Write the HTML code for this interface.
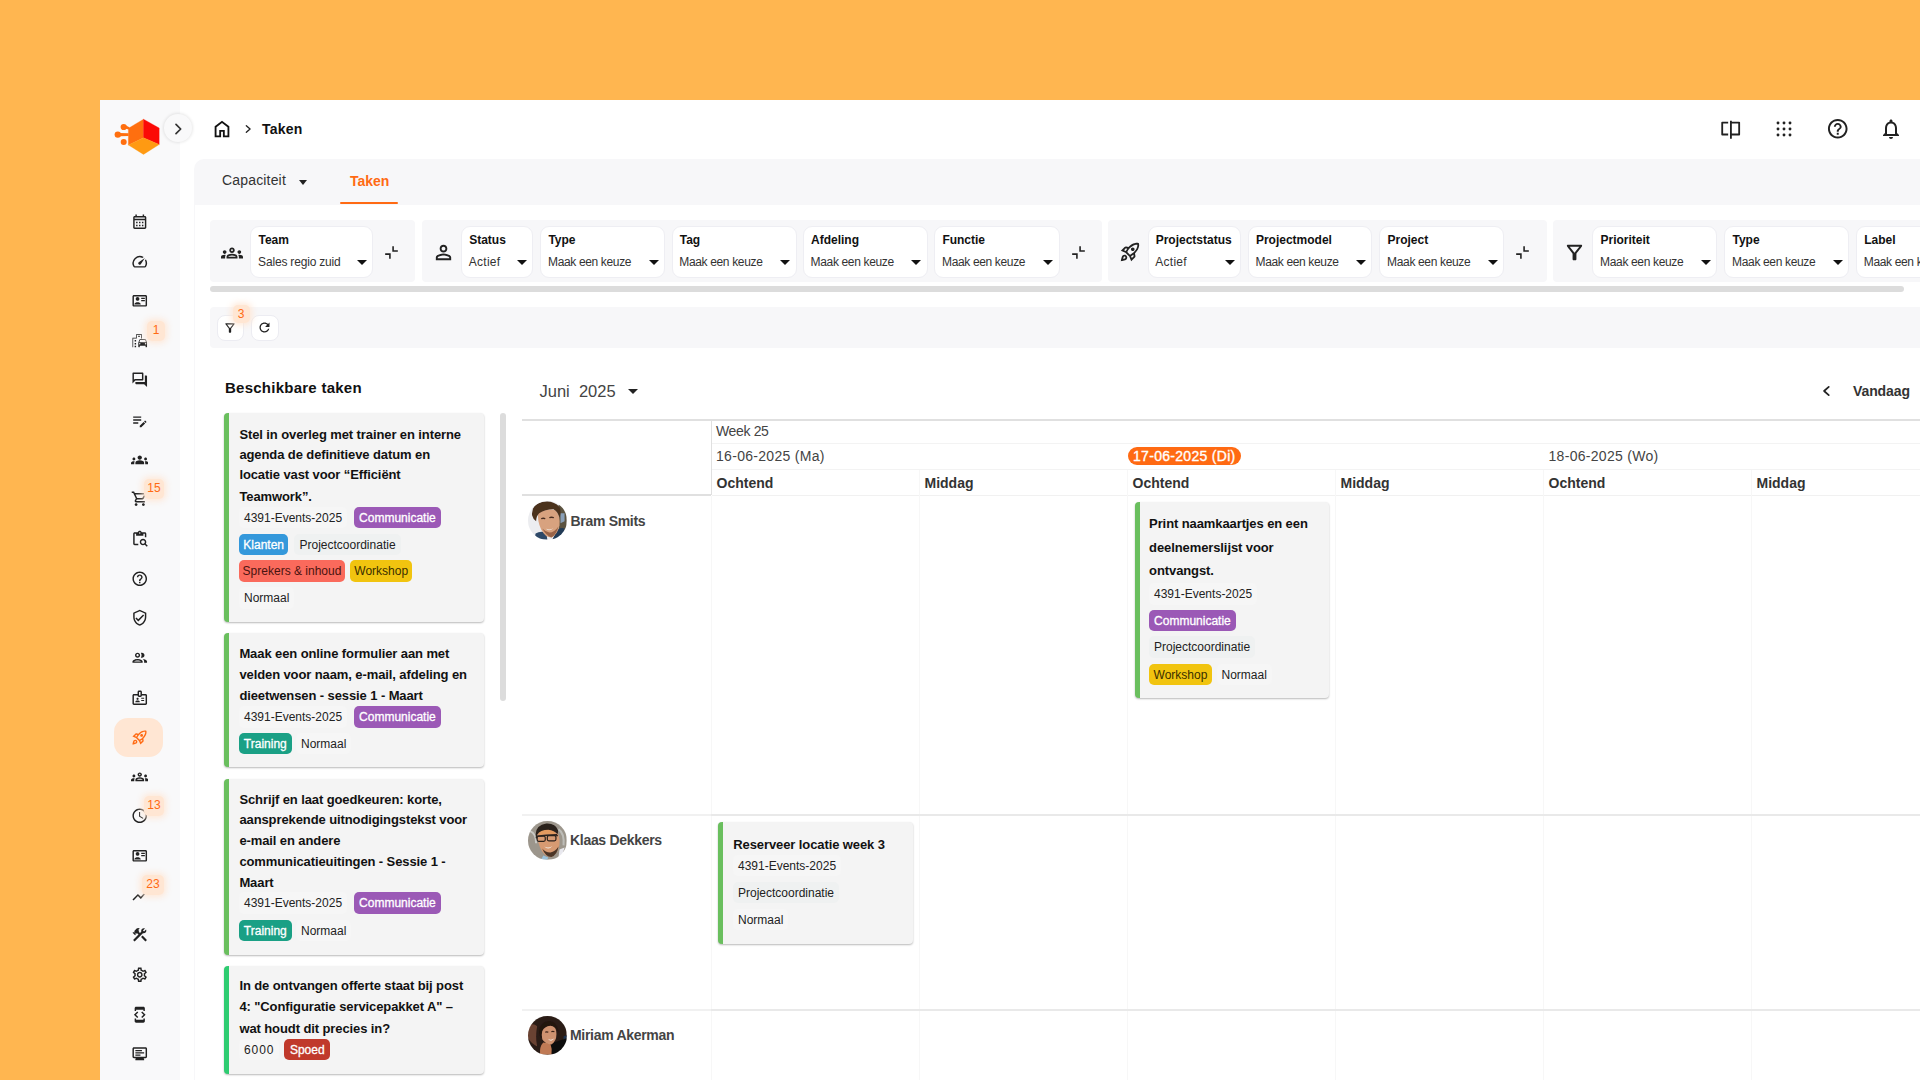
<!DOCTYPE html>
<html lang="nl">
<head>
<meta charset="utf-8">
<title>Taken</title>
<style>
*{box-sizing:border-box;margin:0;padding:0}
html,body{width:1920px;height:1080px;overflow:hidden}
body{background:#ffb650;font-family:"Liberation Sans",sans-serif;color:#222;position:relative}
.abs{position:absolute}
#app{position:absolute;left:100px;top:100px;width:1820px;height:980px;background:#fff;overflow:hidden}
#side{position:absolute;left:0;top:0;width:80px;height:980px;background:#f9f9fa}
#side svg.ic{position:absolute;left:31px;width:16px;height:16px;fill:#222}
.sbadge{position:absolute;min-width:17px;height:18px;border-radius:5px;background:#ffe6d3;color:#ff6a13;font-size:12px;line-height:18px;text-align:center;padding:0 3px;box-shadow:0 0 6px 2px rgba(255,230,211,.9)}
#collapse{position:absolute;left:64px;top:14.300px;width:28px;height:28px;border-radius:50%;background:#f9f9fa;box-shadow:0 0 3px 1px rgba(0,0,0,.09)}
#tabs{position:absolute;left:94px;top:58.5px;width:1730px;height:46.3px;background:#f7f7f9;border-top-left-radius:10px}
.sel{position:absolute;top:126px;height:52px;background:#fff;border:1px solid #eeeef3;border-radius:9px}
.sel b{position:absolute;left:7.2px;top:5.5px;font-size:12px;line-height:14px;color:#111;white-space:nowrap}
.sel span{position:absolute;left:6.8px;top:27.5px;font-size:12px;line-height:14px;color:#333;white-space:nowrap;letter-spacing:-.35px}
.sel i{position:absolute;right:5.5px;top:33px;width:0;height:0;border-left:5px solid transparent;border-right:5px solid transparent;border-top:5px solid #111}
.grp{position:absolute;top:119.7px;height:63px;background:#f7f7f9;border-radius:4px}
.card{position:absolute;background:#f4f4f4;border-left:5px solid #6abf5e;border-radius:4px;box-shadow:0 1px 2px rgba(0,0,0,.28)}
.card .t{position:absolute;left:10px;font-weight:bold;font-size:13px;line-height:20.7px;color:#111;white-space:nowrap;letter-spacing:-.1px}
.chip{position:absolute;height:21.5px;line-height:22.5px;border-radius:5px;font-size:12px;padding:0 5px;white-space:nowrap;letter-spacing:0;color:#222}
.c-pl{background:#f6f6f6}
.c-pu{background:#9b59b6;color:#fff;-webkit-text-stroke:.3px #fff}
.c-bl{background:#3498db;color:#fff;-webkit-text-stroke:.3px #fff}
.c-rd{background:#fa6a5c;color:#4a1410}
.c-ye{background:#f1c40f;color:#3a2f00}
.c-gr{background:#1aa085;color:#fff;-webkit-text-stroke:.3px #fff}
.c-sp{background:#c0392b;color:#fff;-webkit-text-stroke:.3px #fff}
.c-pc{background:#eff1f1}
.hl{position:absolute;background:#ececec;height:1px}
.vl{position:absolute;background:#f0f0f0;width:1px}
.gh{letter-spacing:.3px;position:absolute;font-size:14px;line-height:16px;color:#444;white-space:nowrap}
.ghb{position:absolute;font-size:14px;line-height:16px;color:#333;font-weight:bold;white-space:nowrap}
.nm{letter-spacing:-.3px;position:absolute;font-size:14px;line-height:16px;color:#444;font-weight:bold;white-space:nowrap}
.av{position:absolute;width:38px;height:38px;border-radius:50%;overflow:hidden}
</style>
</head>
<body>
<div id="app">
<div id="side"></div>
<svg class="abs" style="left:12px;top:16px" width="50" height="42" viewBox="112 116 50 42">
<polygon points="143.5,119.2 143.5,137.7 128.4,145 128.4,128.3" fill="#ff6f0f" stroke="#ff6f0f" stroke-width=".3"/>
<polygon points="143.5,119.2 159.2,128 159.2,144.5 143.5,137.7" fill="#fb0a06" stroke="#fb0a06" stroke-width=".3"/>
<polygon points="143.5,137.7 159.2,144.5 143.5,154.4 128.4,145" fill="#ff9a12" stroke="#ff9a12" stroke-width=".3"/>
<g fill="#ff6f0f"><circle cx="123.7" cy="127" r="3.1"/><circle cx="117.8" cy="134.600" r="3.2"/><circle cx="123.7" cy="142.1" r="3"/>
<polygon points="125.5,125.2 129.4,127.2 129.4,129.4 125.5,128.8"/><polygon points="119.5,133 128.600,133.200 128.600,136 119.500,136.200"/></g></svg>
<div id="collapse"></div>
<svg class="abs" style="left:70.400px;top:20.700px" width="16" height="16" viewBox="0 0 24 24" fill="none" stroke="#333" stroke-width="2.6" stroke-linecap="round" stroke-linejoin="round"><path d="M9 5l7 7-7 7"/></svg>
<svg class="abs" style="left:30.8px;top:113.2px" width="17.5" height="17.5" viewBox="0 0 24 24" fill="#222"><path d="M19 4h-1V2h-2v2H8V2H6v2H5c-1.11 0-1.99.9-1.99 2L3 20c0 1.1.89 2 2 2h14c1.1 0 2-.9 2-2V6c0-1.1-.9-2-2-2zm0 16H5V10h14v10zm0-12H5V6h14v2zM9 14H7v-2h2v2zm4 0h-2v-2h2v2zm4 0h-2v-2h2v2zm-8 4H7v-2h2v2zm4 0h-2v-2h2v2zm4 0h-2v-2h2v2z"/></svg>
<svg class="abs" style="left:30.8px;top:153.2px" width="17.5" height="17.5" viewBox="0 0 24 24" fill="#222"><path d="M20.38 8.57l-1.23 1.85a8 8 0 0 1-.22 7.58H5.07A8 8 0 0 1 15.58 6.85l1.85-1.23A10 10 0 0 0 3.35 19a2 2 0 0 0 1.72 1h13.85a2 2 0 0 0 1.74-1 10 10 0 0 0-.27-10.44zm-9.79 6.84a2 2 0 0 0 2.83 0l5.66-8.49-8.49 5.66a2 2 0 0 0 0 2.83z"/></svg>
<svg class="abs" style="left:30.8px;top:192.2px" width="17.5" height="17.5" viewBox="0 0 24 24" fill="#222"><path d="M20 4H4c-1.1 0-2 .9-2 2v12c0 1.1.9 2 2 2h16c1.1 0 2-.9 2-2V6c0-1.1-.9-2-2-2zm0 14H4V6h16v12zM9 12c1.38 0 2.5-1.12 2.5-2.5S10.380 7 9 7 6.500 8.120 6.500 9.500 7.620 12 9 12zm5-4h5v1.600h-5zm0 3h5v1.600h-5zM4.500 17c0-1.900 3-2.800 4.500-2.800s4.500.9 4.500 2.800z"/></svg>
<svg class="abs" style="left:30.8px;top:232.2px" width="17.5" height="17.5" viewBox="0 0 24 24" fill="#222"><path d="M20.57 10.66c-.14-.4-.52-.66-.97-.66h-7.190c-.46 0-.83.26-.98.66L10 14.770l.01 5.510c0 .38.31.72.69.72h.62c.38 0 .68-.38.68-.76V19h8v1.240c0 .38.31.76.69.76h.61c.38 0 .69-.34.69-.72l.01-1.370v-4.140l-1.430-4.110zm-8.160.34h7.190l1.030 3h-9.250l1.030-3zM12 17c-.55 0-1-.45-1-1s.45-1 1-1 1 .45 1 1-.45 1-1 1zm8 0c-.55 0-1-.45-1-1s.45-1 1-1 1 .45 1 1-.45 1-1 1zM14 9h1V3H7v5H2v13h1V9h5V4h6zM5 11h2v2H5zM10 5h2v2h-2zM5 15h2v2H5zM5 19h2v2H5z"/></svg>
<svg class="abs" style="left:30.8px;top:271.2px" width="17.5" height="17.5" viewBox="0 0 24 24" fill="#222"><path d="M15 4v7H5.170L4 12.170V4h11m1-2H3c-.55 0-1 .45-1 1v14l4-4h10c.55 0 1-.45 1-1V3c0-.55-.45-1-1-1zm5 4h-2v9H6v2c0 .55.45 1 1 1h11l4 4V7c0-.55-.45-1-1-1z"/></svg>
<svg class="abs" style="left:30.8px;top:312.2px" width="17.5" height="17.5" viewBox="0 0 24 24" fill="#222"><path d="M3 10h11v2H3v-2zm0-2h11V6H3v2zm0 8h7v-2H3v2zm15.010-3.130l.71-.71c.39-.39 1.020-.39 1.410 0l.71.71c.39.39.39 1.020 0 1.410l-.71.71-2.120-2.120zm-.71.71l-5.300 5.300V21h2.120l5.300-5.300-2.120-2.120z"/></svg>
<svg class="abs" style="left:30.8px;top:351.2px" width="17.5" height="17.5" viewBox="0 0 24 24" fill="#222"><path d="M12 12.750c1.630 0 3.070.39 4.240.9 1.080.48 1.760 1.560 1.760 2.730V18H6v-1.610c0-1.180.68-2.260 1.760-2.730 1.170-.52 2.610-.91 4.240-.91zM4 13c1.100 0 2-.9 2-2s-.9-2-2-2-2 .9-2 2 .9 2 2 2zm1.130 1.100c-.37-.06-.74-.1-1.130-.1-.99 0-1.930.21-2.780.58C.48 14.900 0 15.620 0 16.430V18h4.500v-1.610c0-.83.23-1.610.63-2.290zM20 13c1.100 0 2-.9 2-2s-.9-2-2-2-2 .9-2 2 .9 2 2 2zm4 3.430c0-.81-.48-1.530-1.220-1.850-.85-.37-1.790-.58-2.780-.58-.39 0-.76.04-1.130.1.4.68.63 1.460.63 2.290V18H24v-1.570zM12 6c1.660 0 3 1.340 3 3s-1.340 3-3 3-3-1.340-3-3 1.340-3 3-3z"/></svg>
<svg class="abs" style="left:30.8px;top:390.2px" width="17.5" height="17.5" viewBox="0 0 24 24" fill="#222"><path d="M15.550 13c.75 0 1.410-.41 1.750-1.030l3.580-6.490c.37-.66-.11-1.480-.87-1.480H5.210l-.94-2H1v2h2l3.600 7.590-1.350 2.440C4.520 15.370 5.480 17 7 17h12v-2H7l1.100-2h7.450zM6.160 6h12.150l-2.760 5H8.530L6.160 6zM7 18c-1.100 0-1.990.9-1.990 2S5.900 22 7 22s2-.9 2-2-.9-2-2-2zm10 0c-1.100 0-1.990.9-1.990 2s.89 2 1.990 2 2-.9 2-2-.9-2-2-2z"/></svg>
<svg class="abs" style="left:30.8px;top:430.2px" width="17.5" height="17.5" viewBox="0 0 24 24" fill="#222"><path d="M5 5h2v3h10V5h2v5h2V5c0-1.100-.9-2-2-2h-4.180C14.400 1.840 13.300 1 12 1s-2.400.84-2.820 2H5c-1.100 0-2 .9-2 2v14c0 1.100.9 2 2 2h5v-2H5V5zm7-2c.55 0 1 .45 1 1s-.45 1-1 1-1-.45-1-1 .45-1 1-1zM20.300 18.900c.4-.7.7-1.500.7-2.400 0-2.500-2-4.500-4.500-4.500S12 14 12 16.500s2 4.500 4.500 4.500c.9 0 1.700-.3 2.400-.7l2.700 2.700 1.400-1.400-2.700-2.700zM16.500 19c-1.400 0-2.500-1.100-2.500-2.500s1.100-2.500 2.500-2.500 2.500 1.100 2.500 2.500-1.100 2.500-2.500 2.500z"/></svg>
<svg class="abs" style="left:30.8px;top:470.2px" width="17.5" height="17.5" viewBox="0 0 24 24" fill="#222"><path d="M11 18h2v-2h-2v2zm1-16C6.480 2 2 6.480 2 12s4.480 10 10 10 10-4.480 10-10S17.520 2 12 2zm0 18c-4.410 0-8-3.590-8-8s3.590-8 8-8 8 3.590 8 8-3.590 8-8 8zm0-14c-2.210 0-4 1.790-4 4h2c0-1.100.9-2 2-2s2 .9 2 2c0 2-3 1.750-3 5h2c0-2.250 3-2.500 3-5 0-2.210-1.790-4-4-4z"/></svg>
<svg class="abs" style="left:30.8px;top:509.2px" width="17.5" height="17.5" viewBox="0 0 24 24" fill="#222"><path d="M12 1L3 5v6c0 5.550 3.840 10.740 9 12 5.160-1.260 9-6.450 9-12V5l-9-4zm7 10c0 4.520-2.980 8.690-7 9.930-4.020-1.240-7-5.410-7-9.930V6.300l7-3.110 7 3.110V11zm-11.590.59L6 13l4 4 8-8-1.410-1.420L10 14.170z"/></svg>
<svg class="abs" style="left:30.8px;top:549.2px" width="17.5" height="17.5" viewBox="0 0 24 24" fill="#222"><path d="M9 13.750c-2.340 0-7 1.170-7 3.500V19h14v-1.750c0-2.330-4.660-3.500-7-3.500zM4.340 17c.84-.58 2.870-1.250 4.660-1.250s3.820.67 4.660 1.250H4.340zM9 12c1.930 0 3.500-1.570 3.500-3.500S10.930 5 9 5 5.500 6.570 5.500 8.500 7.070 12 9 12zm0-5c.83 0 1.500.67 1.500 1.500S9.830 10 9 10s-1.500-.67-1.500-1.500S8.170 7 9 7zm7.040 6.810c1.160.84 1.960 1.960 1.960 3.440V19h4v-1.750c0-2.020-3.500-3.170-5.960-3.440zM15 12c1.930 0 3.500-1.570 3.500-3.500S16.930 5 15 5c-.54 0-1.040.13-1.500.35.63.89 1 1.980 1 3.150s-.37 2.260-1 3.150c.46.22.96.35 1.500.35z"/></svg>
<svg class="abs" style="left:30.8px;top:589.2px" width="17.5" height="17.5" viewBox="0 0 24 24" fill="#222"><path d="M14 12h4v1.500h-4zM14 15h4v1.500h-4zM20 7h-5V4c0-1.100-.9-2-2-2h-2c-1.100 0-2 .9-2 2v3H4c-1.100 0-2 .9-2 2v11c0 1.100.9 2 2 2h16c1.100 0 2-.9 2-2V9c0-1.100-.9-2-2-2zm-9-3h2v5h-2V4zm9 16H4V9h5c0 1.100.9 2 2 2h2c1.100 0 2-.9 2-2h5v11zM9 15c.83 0 1.500-.67 1.500-1.500S9.830 12 9 12s-1.500.67-1.500 1.500S8.170 15 9 15zm2.080 1.180C10.440 15.900 9.740 15.750 9 15.750s-1.440.15-2.080.43c-.56.24-.92.78-.92 1.390V18h6v-.43c0-.61-.36-1.150-.92-1.390z"/></svg>
<div class="abs" style="left:14.0px;top:618.0px;width:49.0px;height:39.0px;background:#ffe6d3;border-radius:14px"></div>
<svg class="abs" style="left:30.5px;top:628.5px" width="17" height="17" viewBox="0 0 24 24" fill="#ff6a13"><path d="M6 15c-.83 0-1.580.34-2.120.88C2.700 17.060 2 22 2 22s4.940-.7 6.120-1.880C8.660 19.580 9 18.830 9 18c0-1.660-1.340-3-3-3zm.71 3.710c-.28.28-2.170.76-2.170.76s.47-1.880.76-2.170c.17-.19.42-.3.7-.3.55 0 1 .45 1 1 0 .28-.11.53-.29.71zm10.710-5.060c6.360-6.360 4.240-11.310 4.240-11.310S16.710.22 10.350 6.580l-2.490-.5c-.65-.13-1.330.08-1.810.55L2 10.690l5 2.140L11.170 17l2.140 5 4.050-4.050c.47-.47.68-1.150.55-1.810l-.49-2.490zM7.410 10.830l-1.910-.82 1.970-1.970 1.440.29c-.57.83-1.080 1.700-1.500 2.500zm6.580 7.670l-.82-1.910c.8-.42 1.670-.93 2.490-1.500l.29 1.440-1.960 1.970zM16 12.240c-1.320 1.320-3.380 2.400-4.040 2.730l-2.930-2.930c.32-.65 1.400-2.710 2.730-4.040 4.680-4.680 8.230-3.990 8.230-3.990s.69 3.550-3.990 8.230zM15 11c1.100 0 2-.9 2-2s-.9-2-2-2-2 .9-2 2 .9 2 2 2z"/></svg>
<svg class="abs" style="left:30.8px;top:668.2px" width="17.5" height="17.5" viewBox="0 0 24 24" fill="#222"><path d="M4 13c1.100 0 2-.9 2-2s-.9-2-2-2-2 .9-2 2 .9 2 2 2zm1.130 1.100c-.37-.06-.74-.1-1.130-.1-.99 0-1.930.21-2.780.58C.48 14.900 0 15.620 0 16.430V18h4.500v-1.610c0-.83.23-1.610.63-2.290zM20 13c1.100 0 2-.9 2-2s-.9-2-2-2-2 .9-2 2 .9 2 2 2zm4 3.430c0-.81-.48-1.530-1.220-1.850-.85-.37-1.790-.58-2.780-.58-.39 0-.76.04-1.130.1.4.68.63 1.460.63 2.290V18H24v-1.570zm-7.760-2.780c-1.170-.52-2.610-.9-4.240-.9-1.630 0-3.070.39-4.240.9C6.680 14.130 6 15.210 6 16.390V18h12v-1.610c0-1.180-.68-2.260-1.760-2.740zM8.070 16c.09-.23.13-.39.91-.69.97-.38 1.990-.56 3.020-.56s2.050.18 3.020.56c.77.3.81.46.91.69H8.070zM12 8c.55 0 1 .45 1 1s-.45 1-1 1-1-.45-1-1 .45-1 1-1m0-2c-1.660 0-3 1.340-3 3s1.340 3 3 3 3-1.340 3-3-1.340-3-3-3z"/></svg>
<svg class="abs" style="left:30.8px;top:707.2px" width="17.5" height="17.5" viewBox="0 0 24 24" fill="#222"><path d="M11.990 2C6.470 2 2 6.480 2 12s4.470 10 9.990 10C17.520 22 22 17.520 22 12S17.520 2 11.990 2zM12 20c-4.420 0-8-3.580-8-8s3.580-8 8-8 8 3.580 8 8-3.580 8-8 8zm.5-13H11v6l5.250 3.150.75-1.230-4.500-2.670z"/></svg>
<svg class="abs" style="left:30.8px;top:747.2px" width="17.5" height="17.5" viewBox="0 0 24 24" fill="#222"><path d="M20 4H4c-1.1 0-2 .9-2 2v12c0 1.1.9 2 2 2h16c1.1 0 2-.9 2-2V6c0-1.1-.9-2-2-2zm0 14H4V6h16v12zM9 12c1.38 0 2.5-1.12 2.5-2.5S10.380 7 9 7 6.500 8.120 6.500 9.500 7.620 12 9 12zm5-4h5v1.600h-5zm0 3h5v1.600h-5zM4.500 17c0-1.900 3-2.800 4.500-2.800s4.500.9 4.500 2.800z"/></svg>
<svg class="abs" style="left:30.8px;top:787.2px" width="17.5" height="17.5" viewBox="0 0 24 24" fill="#222"><path d="M3.500 18.490l6-6.010 4 4L22 6.920l-1.410-1.410-7.090 7.970-4-4L2 16.990z"/></svg>
<svg class="abs" style="left:30.8px;top:826.2px" width="17.5" height="17.5" viewBox="0 0 24 24" fill="#222"><path d="M13.783 15.172l2.121-2.121 5.996 5.996-2.121 2.121zM17.500 10c1.930 0 3.500-1.570 3.500-3.500 0-.58-.16-1.120-.41-1.600l-2.700 2.700-1.490-1.490 2.700-2.700c-.48-.25-1.020-.41-1.600-.41C15.570 3 14 4.570 14 6.500c0 .41.08.8.21 1.160l-1.850 1.850-1.780-1.780.71-.71-1.410-1.410L12 3.490c-1.170-1.170-3.070-1.170-4.240 0L4.220 7.030l1.410 1.410H2.810l-.71.71 3.540 3.540.71-.71V9.150l1.410 1.410.71-.71 1.780 1.780-7.410 7.410 2.120 2.120L16.340 9.790c.36.13.75.21 1.160.21z"/></svg>
<svg class="abs" style="left:30.8px;top:866.2px" width="17.5" height="17.5" viewBox="0 0 24 24" fill="#222"><path d="M19.430 12.980c.04-.32.07-.64.07-.98 0-.34-.03-.66-.07-.98l2.110-1.650c.19-.15.24-.42.12-.64l-2-3.460c-.09-.16-.26-.25-.44-.25-.06 0-.12.01-.17.03l-2.490 1c-.52-.4-1.080-.73-1.690-.98l-.38-2.650C14.460 2.180 14.250 2 14 2h-4c-.25 0-.46.18-.49.42l-.38 2.650c-.61.25-1.170.59-1.690.98l-2.490-1c-.06-.02-.12-.03-.18-.03-.17 0-.34.09-.43.25l-2 3.460c-.13.22-.07.49.12.64l2.110 1.650c-.04.32-.07.65-.07.98 0 .33.03.66.07.98l-2.110 1.650c-.19.15-.24.42-.12.64l2 3.460c.09.16.26.25.44.25.06 0 .12-.01.17-.03l2.490-1c.52.4 1.080.73 1.690.98l.38 2.650c.03.24.24.42.49.42h4c.25 0 .46-.18.49-.42l.38-2.650c.61-.25 1.170-.59 1.690-.98l2.490 1c.06.02.12.03.18.03.17 0 .34-.09.43-.25l2-3.460c.12-.22.07-.49-.12-.64l-2.110-1.650zm-1.980-1.710c.04.31.05.52.05.73 0 .21-.02.43-.05.73l-.14 1.130.89.7 1.080.84-.7 1.210-1.270-.51-1.040-.42-.9.68c-.43.32-.84.56-1.250.73l-1.060.43-.16 1.130-.2 1.350h-1.400l-.19-1.350-.16-1.130-1.060-.43c-.43-.18-.83-.41-1.230-.71l-.91-.7-1.060.43-1.270.51-.7-1.210 1.080-.84.89-.7-.14-1.130c-.03-.31-.05-.54-.05-.74s.02-.43.05-.73l.14-1.130-.89-.7-1.080-.84.7-1.210 1.270.51 1.040.42.9-.68c.43-.32.84-.56 1.250-.73l1.060-.43.16-1.130.2-1.350h1.390l.19 1.350.16 1.130 1.060.43c.43.18.83.41 1.230.71l.91.7 1.060-.43 1.270-.51.7 1.210-1.070.85-.89.7.14 1.130zM12 8c-2.210 0-4 1.790-4 4s1.790 4 4 4 4-1.790 4-4-1.790-4-4-4zm0 6c-1.100 0-2-.9-2-2s.9-2 2-2 2 .9 2 2-.9 2-2 2z"/></svg>
<svg class="abs" style="left:30.8px;top:906.2px" width="17.5" height="17.5" viewBox="0 0 24 24" fill="#222"><path d="M7 5h10v2h2V3c0-1.100-.9-1.990-2-1.990L7 1c-1.100 0-2 .9-2 2v4h2V5zm8.410 11.590L20 12l-4.590-4.590L14 8.830 17.170 12 14 15.170l1.410 1.420zM10 15.170L6.830 12 10 8.830 8.590 7.410 4 12l4.590 4.590L10 15.170zM17 19H7v-2H5v4c0 1.100.9 2 2 2h10c1.100 0 2-.9 2-2v-4h-2v2z"/></svg>
<svg class="abs" style="left:30.8px;top:945.2px" width="17.5" height="17.5" viewBox="0 0 24 24" fill="#222"><path d="M20 3H4c-1.100 0-2 .9-2 2v11c0 1.100.9 2 2 2h3l-1 1v2h12v-2l-1-1h3c1.100 0 2-.9 2-2V5c0-1.100-.9-2-2-2zm0 13H4V5h16v11zM6 7h9v1.600H6zm0 3h12v1.600H6zm0 3h7v1.600H6z"/></svg>
<div class="sbadge" style="left:47.0px;top:221.0px;width:18.0px;height:20.0px;">1</div>
<div class="sbadge" style="left:44.0px;top:379.0px;width:20.0px;height:20.0px;">15</div>
<div class="sbadge" style="left:44.0px;top:696.0px;width:20.0px;height:20.0px;">13</div>
<div class="sbadge" style="left:42.0px;top:775.0px;width:22.0px;height:20.0px;">23</div>
<svg class="abs" style="left:110.7px;top:17.8px" width="22" height="22" viewBox="0 0 24 24" fill="#111"><path d="M6 19h3v-6h6v6h3v-9l-6-4.500L6 10Zm-2 2V9l8-6 8 6v12h-7v-6h-2v6Z"/></svg>
<svg class="abs" style="left:143px;top:23.5px" width="10" height="10" viewBox="0 0 24 24" fill="none" stroke="#222" stroke-width="3.2" stroke-linecap="round" stroke-linejoin="round"><path d="M8 4l9 8-9 8"/></svg>
<div class="abs" style="left:162.0px;top:20.5px;font-size:14px;line-height:16px;font-weight:bold;color:#111;letter-spacing:.2px">Taken</div>
<svg class="abs" style="left:1619px;top:18px" width="22" height="22" viewBox="0 0 24 24" fill="none" stroke="#222" stroke-width="2" stroke-linejoin="round"><path d="M10 5H3.500v13H10M13 5h9v13H13M13 3v19.500"/></svg>
<svg class="abs" style="left:1675px;top:20px" width="18" height="18" viewBox="0 0 18 18" fill="#222"><circle cx="3" cy="3" r="1.45"/><circle cx="3" cy="9" r="1.45"/><circle cx="3" cy="15" r="1.45"/><circle cx="9" cy="3" r="1.45"/><circle cx="9" cy="9" r="1.45"/><circle cx="9" cy="15" r="1.45"/><circle cx="15" cy="3" r="1.45"/><circle cx="15" cy="9" r="1.45"/><circle cx="15" cy="15" r="1.45"/></svg>
<svg class="abs" style="left:1725.5px;top:16.8px" width="23.5" height="23.5" viewBox="0 0 24 24" fill="#222"><path d="M11 18h2v-2h-2v2zm1-16C6.480 2 2 6.480 2 12s4.480 10 10 10 10-4.480 10-10S17.520 2 12 2zm0 18c-4.410 0-8-3.590-8-8s3.590-8 8-8 8 3.590 8 8-3.590 8-8 8zm0-14c-2.210 0-4 1.790-4 4h2c0-1.100.9-2 2-2s2 .9 2 2c0 2-3 1.750-3 5h2c0-2.250 3-2.500 3-5 0-2.210-1.790-4-4-4z"/></svg>
<svg class="abs" style="left:1778.7px;top:16.6px" width="24" height="24" viewBox="0 0 24 24" fill="#222"><path d="M12 22c1.100 0 2-.9 2-2h-4c0 1.100.9 2 2 2zm6-6v-5c0-3.070-1.630-5.640-4.500-6.320V4c0-.83-.67-1.500-1.500-1.500s-1.500.67-1.500 1.500v.68C7.640 5.360 6 7.920 6 11v5l-2 2v1h16v-1l-2-2zm-2 1H8v-6c0-2.480 1.510-4.500 4-4.500s4 2.020 4 4.500v6z"/></svg>
<div id="tabs"></div>
<div class="abs" style="left:93.6px;top:105.0px;width:1.0px;height:875.0px;background:#f7f7f9"></div>
<div class="abs" style="left:122.0px;top:72.0px;font-size:14px;line-height:16px;color:#333;letter-spacing:.17px">Capaciteit</div>
<div class="abs" style="left:198.5px;top:80.0px;width:9.5px;height:5.0px;width:0;height:0;border-left:4.5px solid transparent;border-right:4.5px solid transparent;border-top:5px solid #222"></div>
<div class="abs" style="left:250.0px;top:73.0px;font-size:14px;line-height:16px;font-weight:bold;color:#ff6a13">Taken</div>
<div class="abs" style="left:239.5px;top:101.5px;width:58.0px;height:2.8px;background:#ff6a13;border-radius:2px"></div>
<div class="grp" style="left:110.0px;top:120.0px;width:205.3px;height:62.0px;"></div>
<div class="grp" style="left:321.5px;top:120.0px;width:680.0px;height:62.0px;"></div>
<div class="grp" style="left:1007.5px;top:120.0px;width:439.3px;height:62.0px;"></div>
<div class="grp" style="left:1452.5px;top:120.0px;width:377.5px;height:62.0px;"></div>
<svg class="abs" style="left:121.0px;top:141.5px" width="22" height="22" viewBox="0 0 24 24" fill="#222"><path d="M4 13c1.100 0 2-.9 2-2s-.9-2-2-2-2 .9-2 2 .9 2 2 2zm1.130 1.100c-.37-.06-.74-.1-1.130-.1-.99 0-1.930.21-2.780.58C.48 14.900 0 15.620 0 16.430V18h4.500v-1.610c0-.83.23-1.610.63-2.290zM20 13c1.100 0 2-.9 2-2s-.9-2-2-2-2 .9-2 2 .9 2 2 2zm4 3.430c0-.81-.48-1.530-1.220-1.850-.85-.37-1.790-.58-2.780-.58-.39 0-.76.04-1.130.1.4.68.63 1.460.63 2.290V18H24v-1.570zm-7.760-2.780c-1.170-.52-2.610-.9-4.240-.9-1.630 0-3.070.39-4.240.9C6.680 14.130 6 15.210 6 16.390V18h12v-1.610c0-1.180-.68-2.260-1.760-2.740zM8.070 16c.09-.23.13-.39.91-.69.97-.38 1.990-.56 3.020-.56s2.050.18 3.020.56c.77.3.81.46.91.69H8.070zM12 8c.55 0 1 .45 1 1s-.45 1-1 1-1-.45-1-1 .45-1 1-1m0-2c-1.660 0-3 1.340-3 3s1.340 3 3 3 3-1.340 3-3-1.340-3-3-3z"/></svg>
<div class="sel" style="left:150.3px;width:122.9px"><b>Team</b><span style="letter-spacing:-.18px">Sales regio zuid</span><i></i></div>
<svg class="abs" style="left:281.7px;top:142.7px" width="19" height="19" viewBox="0 0 24 24" fill="#222"><path d="M4 13h7v7H9v-5H4v-2zM13 4h2v5h5v2h-7V4z"/></svg>
<svg class="abs" style="left:331.7px;top:141.0px" width="23" height="23" viewBox="0 0 24 24" fill="#222"><path d="M12 6c1.100 0 2 .9 2 2s-.9 2-2 2-2-.9-2-2 .9-2 2-2m0 9c2.700 0 5.800 1.290 6 2v1H6v-.99c.2-.72 3.300-2.010 6-2.010m0-11C9.790 4 8 5.790 8 8s1.790 4 4 4 4-1.790 4-4-1.790-4-4-4zm0 9c-2.670 0-8 1.340-8 4v3h16v-3c0-2.660-5.330-4-8-4z"/></svg>
<div class="sel" style="left:361.0px;width:72.3px"><b>Status</b><span style="letter-spacing:.25px">Actief</span><i></i></div>
<div class="sel" style="left:440.2px;width:125.0px"><b>Type</b><span>Maak een keuze</span><i></i></div>
<div class="sel" style="left:571.5px;width:125.0px"><b>Tag</b><span>Maak een keuze</span><i></i></div>
<div class="sel" style="left:702.8px;width:125.0px"><b>Afdeling</b><span>Maak een keuze</span><i></i></div>
<div class="sel" style="left:834.2px;width:125.4px"><b>Functie</b><span>Maak een keuze</span><i></i></div>
<svg class="abs" style="left:968.7px;top:142.7px" width="19" height="19" viewBox="0 0 24 24" fill="#222"><path d="M4 13h7v7H9v-5H4v-2zM13 4h2v5h5v2h-7V4z"/></svg>
<svg class="abs" style="left:1019.0px;top:141.0px" width="22" height="22" viewBox="0 0 24 24" fill="#222"><path d="M6 15c-.83 0-1.580.34-2.120.88C2.700 17.060 2 22 2 22s4.940-.7 6.120-1.880C8.660 19.580 9 18.830 9 18c0-1.660-1.340-3-3-3zm.71 3.710c-.28.28-2.170.76-2.170.76s.47-1.880.76-2.170c.17-.19.42-.3.7-.3.55 0 1 .45 1 1 0 .28-.11.53-.29.71zm10.710-5.060c6.360-6.360 4.240-11.310 4.240-11.310S16.710.22 10.350 6.580l-2.490-.5c-.65-.13-1.330.08-1.810.55L2 10.690l5 2.140L11.170 17l2.140 5 4.050-4.050c.47-.47.68-1.150.55-1.810l-.49-2.490zM7.410 10.830l-1.910-.82 1.970-1.970 1.440.29c-.57.83-1.080 1.700-1.500 2.500zm6.580 7.670l-.82-1.910c.8-.42 1.670-.93 2.490-1.500l.29 1.440-1.960 1.970zM16 12.240c-1.320 1.320-3.380 2.400-4.040 2.730l-2.930-2.930c.32-.65 1.400-2.710 2.730-4.040 4.680-4.680 8.230-3.990 8.230-3.990s.69 3.550-3.990 8.230zM15 11c1.100 0 2-.9 2-2s-.9-2-2-2-2 .9-2 2 .9 2 2 2z"/></svg>
<div class="sel" style="left:1047.5px;width:93.5px"><b>Projectstatus</b><span style="letter-spacing:.25px">Actief</span><i></i></div>
<div class="sel" style="left:1147.7px;width:124.7px"><b>Projectmodel</b><span>Maak een keuze</span><i></i></div>
<div class="sel" style="left:1279.3px;width:125.0px"><b>Project</b><span>Maak een keuze</span><i></i></div>
<svg class="abs" style="left:1413.3px;top:142.7px" width="19" height="19" viewBox="0 0 24 24" fill="#222"><path d="M4 13h7v7H9v-5H4v-2zM13 4h2v5h5v2h-7V4z"/></svg>
<svg class="abs" style="left:1463.0px;top:140.5px" width="23" height="23" viewBox="0 0 24 24" fill="#222"><path d="M7 6h10l-5.010 6.300L7 6zm-2.750-.39C6.270 8.200 10 13 10 13v6c0 .55.45 1 1 1h2c.55 0 1-.45 1-1v-6s3.720-4.800 5.740-7.390c.51-.66.04-1.610-.79-1.610H5.040c-.83 0-1.300.95-.79 1.610z"/></svg>
<div class="sel" style="left:1492.3px;width:125.0px"><b>Prioriteit</b><span>Maak een keuze</span><i></i></div>
<div class="sel" style="left:1624.3px;width:125.0px"><b>Type</b><span>Maak een keuze</span><i></i></div>
<div class="sel" style="left:1756.0px;width:125.0px"><b>Label</b><span>Maak een keuze</span><i></i></div>
<div class="abs" style="left:110.0px;top:186.0px;width:1694.0px;height:5.7px;background:#dcdcdc;border-radius:3px"></div>
<div class="abs" style="left:110.0px;top:207.2px;width:1720.0px;height:41.3px;background:#f7f7f9;border-radius:4px"></div>
<div class="abs" style="left:117.0px;top:214.5px;width:27.3px;height:26.0px;background:#fff;border:1px solid #ececf2;border-radius:8px"></div>
<div class="abs" style="left:151.0px;top:214.5px;width:27.5px;height:26.0px;background:#fff;border:1px solid #ececf2;border-radius:8px"></div>
<svg class="abs" style="left:123.3px;top:220.8px" width="14" height="14" viewBox="0 0 24 24" fill="#222"><path d="M7 6h10l-5.010 6.300L7 6zm-2.750-.39C6.270 8.200 10 13 10 13v6c0 .55.45 1 1 1h2c.55 0 1-.45 1-1v-6s3.720-4.800 5.740-7.390c.51-.66.04-1.610-.79-1.610H5.040c-.83 0-1.300.95-.79 1.610z"/></svg>
<svg class="abs" style="left:157.3px;top:220.0px" width="15" height="15" viewBox="0 0 24 24" fill="#222"><path d="M17.650 6.350C16.200 4.900 14.210 4 12 4c-4.420 0-7.990 3.580-7.990 8s3.570 8 7.990 8c3.730 0 6.840-2.550 7.730-6h-2.080c-.82 2.330-3.040 4-5.650 4-3.310 0-6-2.690-6-6s2.690-6 6-6c1.660 0 3.140.69 4.220 1.780L13 11h7V4l-2.350 2.350z"/></svg>
<div class="sbadge" style="left:132.5px;top:205.0px;width:17.0px;height:18.0px;">3</div>
<div class="abs" style="left:125.0px;top:279.0px;font-size:15px;line-height:18px;font-weight:bold;color:#111;letter-spacing:.25px">Beschikbare taken</div>
<div class="abs" style="left:400.0px;top:313.0px;width:6.0px;height:288.0px;background:#dcdcdc;border-radius:3px"></div>
<div class="card" style="left:124.3px;top:313.3px;width:260.2px;height:208.9px;border-left-color:#6abf5e"><div class="t" style="left:10.1px;top:11.7px;line-height:20.7px">Stel in overleg met trainer en interne</div><div class="t" style="left:10.1px;top:32.2px;line-height:20.7px">agenda de definitieve datum en</div><div class="t" style="left:10.1px;top:52.2px;line-height:20.7px">locatie vast voor “Efficiënt</div><div class="t" style="left:10.1px;top:73.3px;line-height:20.7px">Teamwork”.</div><span class="chip c-pl" style="left:9.7px;top:93.7px;">4391-Events-2025</span><span class="chip c-pu" style="left:124.6px;top:93.7px;width:87.1px;text-align:center;padding:0;">Communicatie</span><span class="chip c-bl" style="left:9.7px;top:120.5px;width:49.3px;text-align:center;padding:0;">Klanten</span><span class="chip c-pc" style="left:64.6px;top:120.5px;width:107.3px;text-align:center;padding:0;">Projectcoordinatie</span><span class="chip c-rd" style="left:9.7px;top:147.1px;width:106.0px;text-align:center;padding:0;">Sprekers &amp; inhoud</span><span class="chip c-ye" style="left:120.8px;top:147.1px;width:62.2px;text-align:center;padding:0;">Workshop</span><span class="chip c-pl" style="left:9.7px;top:174.0px;">Normaal</span></div>
<div class="card" style="left:124.3px;top:532.9px;width:260.2px;height:134.2px;border-left-color:#6abf5e"><div class="t" style="left:10.1px;top:11.0px;line-height:20.7px">Maak een online formulier aan met</div><div class="t" style="left:10.1px;top:32.1px;line-height:20.7px">velden voor naam, e-mail, afdeling en</div><div class="t" style="left:10.1px;top:53.4px;line-height:20.7px">dieetwensen - sessie 1 - Maart</div><span class="chip c-pl" style="left:9.7px;top:73.3px;">4391-Events-2025</span><span class="chip c-pu" style="left:124.6px;top:73.3px;width:87.1px;text-align:center;padding:0;">Communicatie</span><span class="chip c-gr" style="left:9.7px;top:99.9px;width:52.7px;text-align:center;padding:0;">Training</span><span class="chip c-pl" style="left:66.7px;top:99.9px;">Normaal</span></div>
<div class="card" style="left:124.3px;top:678.9px;width:260.2px;height:176.1px;border-left-color:#6abf5e"><div class="t" style="left:10.1px;top:11.4px;line-height:20.7px">Schrijf en laat goedkeuren: korte,</div><div class="t" style="left:10.1px;top:31.4px;line-height:20.7px">aansprekende uitnodigingstekst voor</div><div class="t" style="left:10.1px;top:52.5px;line-height:20.7px">e-mail en andere</div><div class="t" style="left:10.1px;top:73.3px;line-height:20.7px">communicatieuitingen - Sessie 1 -</div><div class="t" style="left:10.1px;top:94.2px;line-height:20.7px">Maart</div><span class="chip c-pl" style="left:9.7px;top:113.5px;">4391-Events-2025</span><span class="chip c-pu" style="left:124.6px;top:113.5px;width:87.1px;text-align:center;padding:0;">Communicatie</span><span class="chip c-gr" style="left:9.7px;top:141.1px;width:52.7px;text-align:center;padding:0;">Training</span><span class="chip c-pl" style="left:66.7px;top:141.1px;">Normaal</span></div>
<div class="card" style="left:124.3px;top:865.8px;width:260.2px;height:107.8px;border-left-color:#2ecc71"><div class="t" style="left:10.1px;top:10.5px;line-height:20.7px">In de ontvangen offerte staat bij post</div><div class="t" style="left:10.1px;top:31.6px;line-height:20.7px">4: "Configuratie servicepakket A" –</div><div class="t" style="left:10.1px;top:52.9px;line-height:20.7px">wat houdt dit precies in?</div><span class="chip c-pl" style="left:9.7px;top:73.1px;"><span style="letter-spacing:.9px">6000</span></span><span class="chip c-sp" style="left:55.2px;top:73.1px;width:45.5px;text-align:center;padding:0;">Spoed</span></div>
<div class="abs" style="left:439.5px;top:280.5px;font-size:16.5px;line-height:20px;color:#444">Juni&nbsp; 2025</div>
<div class="abs" style="left:527.5px;top:288.5px;width:10.0px;height:5.0px;width:0;height:0;border-left:5px solid transparent;border-right:5px solid transparent;border-top:5px solid #222"></div>
<svg class="abs" style="left:1720px;top:284px" width="14" height="14" viewBox="0 0 24 24" fill="none" stroke="#222" stroke-width="3" stroke-linecap="round" stroke-linejoin="round"><path d="M15 5l-8 7 8 7"/></svg>
<div class="abs" style="left:1753.0px;top:283.0px;font-size:14px;line-height:16px;font-weight:bold;color:#333;letter-spacing:-.1px">Vandaag</div>
<div class="abs" style="left:422.0px;top:319.0px;width:1398.0px;height:2.0px;background:#e0e0e0"></div>
<div class="abs" style="left:610.6px;top:320.0px;width:1.6px;height:75.0px;background:#e0e0e0"></div>
<div class="abs" style="left:422.0px;top:394.3px;width:189.0px;height:1.7px;background:#e0e0e0"></div>
<div class="abs" style="left:612.0px;top:343.3px;width:1208.0px;height:1.2px;background:#f3f3f3"></div>
<div class="abs" style="left:612.0px;top:369.3px;width:1208.0px;height:1.2px;background:#f3f3f3"></div>
<div class="abs" style="left:612.0px;top:394.5px;width:1208.0px;height:1.2px;background:#f1f1f1"></div>
<div class="abs" style="left:610.7px;top:396.0px;width:1.2px;height:584.0px;background:#f7f7f7"></div>
<div class="abs" style="left:818.5px;top:370.0px;width:1.2px;height:610.0px;background:#f7f7f7"></div>
<div class="abs" style="left:1027.0px;top:370.0px;width:1.2px;height:610.0px;background:#f7f7f7"></div>
<div class="abs" style="left:1234.9px;top:370.0px;width:1.2px;height:610.0px;background:#f7f7f7"></div>
<div class="abs" style="left:1442.9px;top:370.0px;width:1.2px;height:610.0px;background:#f7f7f7"></div>
<div class="abs" style="left:1651.0px;top:370.0px;width:1.2px;height:610.0px;background:#f7f7f7"></div>
<div class="abs" style="left:422.0px;top:714.3px;width:189.0px;height:1.4px;background:#f1f1f1"></div>
<div class="abs" style="left:611.0px;top:714.0px;width:1209.0px;height:2.0px;background:#e9e9e9"></div>
<div class="abs" style="left:422.0px;top:909.3px;width:189.0px;height:1.4px;background:#f1f1f1"></div>
<div class="abs" style="left:611.0px;top:909.0px;width:1209.0px;height:2.0px;background:#e9e9e9"></div>
<div class="gh" style="left:616.0px;top:323.0px;letter-spacing:-.35px">Week 25</div>
<div class="gh" style="left:616.0px;top:348.0px;">16-06-2025 (Ma)</div>
<div class="abs" style="left:1028.0px;top:347.0px;width:113.0px;height:18.0px;background:#ff6a13;border-radius:9px"></div>
<div class="gh" style="left:1033.0px;top:348.0px;color:#fff;letter-spacing:.3px;-webkit-text-stroke:.35px #fff">17-06-2025 (Di)</div>
<div class="gh" style="left:1448.5px;top:348.0px;">18-06-2025 (Wo)</div>
<div class="ghb" style="left:616.5px;top:374.5px;">Ochtend</div>
<div class="ghb" style="left:824.5px;top:374.5px;">Middag</div>
<div class="ghb" style="left:1032.5px;top:374.5px;">Ochtend</div>
<div class="ghb" style="left:1240.5px;top:374.5px;">Middag</div>
<div class="ghb" style="left:1448.5px;top:374.5px;">Ochtend</div>
<div class="ghb" style="left:1656.5px;top:374.5px;">Middag</div>
<svg class="abs" style="left:428.0px;top:401.1px;border-radius:50%" width="38.600" height="38.600" viewBox="0 0 38 38"><defs><filter id="bl0" x="-10%" y="-10%" width="120%" height="120%"><feGaussianBlur stdDeviation=".65"/></filter></defs><g filter="url(#bl0)"><rect width="38" height="38" fill="#ecedf0"/><path d="M30 4L38 4V30L30 30Z" fill="#5b523f"/><path d="M32 12L36 12L36 20L32 22Z" fill="#8aa0b8"/><path d="M6 38L7.500 32Q12 29 18 31L19 38Z" fill="#2d4868"/><path d="M29 28Q33 26 36 27L36 38L24 38Z" fill="#233a57"/><path d="M10 12Q18 7 27 9Q32 14 31 24Q29 33 23 36Q17 36 13 28Q9 20 10 12Z" fill="#d8a27f"/><path d="M14 27Q18 34 23 36Q28 33 30 25Q26 31 21 31Q17 30 14 27Z" fill="#9a6446"/><path d="M4 14Q3 4 14 1Q25 -1 31 6Q33 11 31 16Q29 10 25 8Q17 8 11 12Q8 15 8 20Q5 18 4 14Z" fill="#4b311f"/><path d="M17.500 27Q21 29.500 25 26.500Q21 31 17.500 27Z" fill="#f4ece6"/><path d="M13 17.500Q15 16.500 17 17.500M21 16.500Q23 15.500 25.500 16.500" stroke="#4a2e20" stroke-width="1.300" fill="none"/></g></svg>
<div class="nm" style="left:470.5px;top:412.5px;">Bram Smits</div>
<svg class="abs" style="left:428.1px;top:721.2px;border-radius:50%" width="38.600" height="38.600" viewBox="0 0 38 38"><defs><filter id="bl1" x="-10%" y="-10%" width="120%" height="120%"><feGaussianBlur stdDeviation=".65"/></filter></defs><g filter="url(#bl1)"><rect width="38" height="38" fill="#9c968c"/><path d="M2 10Q8 12 8 22" stroke="#c9c9c5" stroke-width="2" fill="none"/><path d="M30 8Q36 12 35 24" stroke="#bdbdb8" stroke-width="2" fill="none"/><path d="M13 38L15 34L20 36L19 38Z" fill="#9cc3dc"/><path d="M31 28L36 26L34 33L30 36Z" fill="#e8e8ee"/><path d="M9 12Q16 6 27 9Q32 14 31 23Q30 31 24 35Q18 36 14 30Q9 22 9 12Z" fill="#d79a72"/><path d="M11 9Q18 7 26 10L27 14Q18 11 11 14Z" fill="#e39a5e"/><path d="M14 27Q17 35 23 35.500Q29 33 30 25Q27 30 22 31Q17 31 14 27Z" fill="#4c3528"/><path d="M7.500 13Q8 4 18 2.500Q27 2 29.500 9Q30 11 29 13Q26 9 20 8.500Q12 8.500 9 13.500Q8 16 8.500 18Q7.500 16 7.500 13Z" fill="#2a201a"/><path d="M8 17L9 15L18 14L28 13.500L29 15" stroke="#2b211c" stroke-width="1.400" fill="none"/><rect x="9" y="15" width="8" height="5" rx="1.500" fill="none" stroke="#2b211c" stroke-width="1.200"/><rect x="19" y="14.500" width="8.500" height="5" rx="1.500" fill="none" stroke="#2b211c" stroke-width="1.200"/><path d="M16 25Q20 27.500 24 24.500Q20 29.500 16 25Z" fill="#f3ebe4"/></g></svg>
<div class="nm" style="left:470.0px;top:732.0px;">Klaas Dekkers</div>
<svg class="abs" style="left:428.0px;top:916.1px;border-radius:50%" width="38.600" height="38.600" viewBox="0 0 38 38"><defs><filter id="bl2" x="-10%" y="-10%" width="120%" height="120%"><feGaussianBlur stdDeviation=".65"/></filter></defs><g filter="url(#bl2)"><rect width="38" height="38" fill="#2a1a16"/><path d="M0 10Q5 6 9 10Q7 20 9 30Q4 28 0 22Z" fill="#6a4232"/><path d="M35 20L38 19L38 27L35 28Z" fill="#1d3350"/><path d="M22 27L38 22L38 38L24 38Z" fill="#0e0c0c"/><path d="M12 38Q11 30 15 26L22 27Q24 32 23 38Z" fill="#c07a54"/><path d="M13 14Q16 7 23 8Q28 10 28 18Q28 25 23 28Q17 28 14 23Q12 18 13 14Z" fill="#cf9270"/><path d="M11 16Q11 6 21 5Q29 6 30 16Q27 10 22 9.500Q16 10 14 15Q13 19 14 23Q11 20 11 16Z" fill="#23130f"/><path d="M19.500 22.500Q23 24.500 26 22Q23 26.500 19.500 22.500Z" fill="#f6ece6"/><path d="M17 16Q18.500 15.200 20 16M23 15.500Q24.500 14.800 26 15.500" stroke="#3a2018" stroke-width="1.200" fill="none"/></g></svg>
<div class="nm" style="left:470.0px;top:927.3px;">Miriam Akerman</div>
<div class="card" style="left:1035.0px;top:401.7px;width:194.4px;height:196.5px;border-left-color:#6abf5e"><div class="t" style="left:9.1px;top:10.4px;line-height:23.5px">Print naamkaartjes en een</div><div class="t" style="left:9.1px;top:33.9px;line-height:23.5px">deelnemerslijst voor</div><div class="t" style="left:9.1px;top:57.4px;line-height:23.5px">ontvangst.</div><span class="chip c-pl" style="left:9.0px;top:81.8px;">4391-Events-2025</span><span class="chip c-pu" style="left:9.0px;top:108.3px;width:86.8px;text-align:center;padding:0;">Communicatie</span><span class="chip c-pc" style="left:9.0px;top:134.8px;">Projectcoordinatie</span><span class="chip c-ye" style="left:9.0px;top:162.1px;width:62.9px;text-align:center;padding:0;">Workshop</span><span class="chip c-pl" style="left:76.5px;top:162.1px;">Normaal</span></div>
<div class="card" style="left:618.3px;top:721.7px;width:195.0px;height:122.3px;border-left-color:#6abf5e"><div class="t" style="left:10.0px;top:11.8px;line-height:23.5px">Reserveer locatie week 3</div><span class="chip c-pl" style="left:9.7px;top:33.3px;">4391-Events-2025</span><span class="chip c-pc" style="left:9.7px;top:59.9px;">Projectcoordinatie</span><span class="chip c-pl" style="left:9.7px;top:87.3px;">Normaal</span></div>
</div>
</body>
</html>
